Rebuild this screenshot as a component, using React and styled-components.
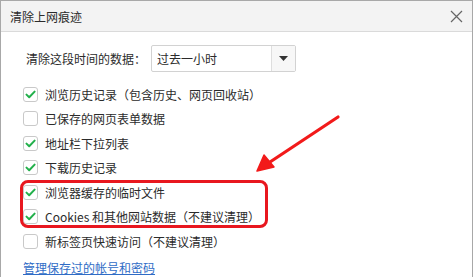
import React from 'react'
import styled, { createGlobalStyle } from 'styled-components'

const GlobalStyle = createGlobalStyle`
    html, body {
        margin: 0;
        padding: 0;
        background: #ffffff;
    }
    body {
        font-family: "Noto Sans CJK SC", "Liberation Sans", sans-serif;
        color: #2b2b2b;
    }
`

const items = [
    { label: '浏览历史记录（包含历史、网页回收站）', checked: true },
    { label: '已保存的网页表单数据', checked: false },
    { label: '地址栏下拉列表', checked: true },
    { label: '下载历史记录', checked: true },
    { label: '浏览器缓存的临时文件', checked: true },
    { label: 'Cookies 和其他网站数据（不建议清理）', checked: true },
    { label: '新标签页快速访问（不建议清理）', checked: false },
]

function CheckIcon() {
    return (
        <svg width="11" height="9" viewBox="0 0 11 9">
            <path d="M1.5 4.6 L4.2 7.2 L9.6 1.6" fill="none" stroke="#22b04b" strokeWidth="2" strokeLinecap="round" strokeLinejoin="round" />
        </svg>
    )
}

function App() {
    return (
        <Page>
            <GlobalStyle />
            <Dialog>
                <TitleBar>
                    <Title>清除上网痕迹</Title>
                    <CloseButton>
                        <svg width="13" height="13" viewBox="0 0 13 13">
                            <path d="M1 1 L12 12 M12 1 L1 12" stroke="#666" strokeWidth="1.2" />
                        </svg>
                    </CloseButton>
                </TitleBar>
                <Body>
                    <RangeRow>
                        <RangeLabel>清除这段时间的数据：</RangeLabel>
                        <Select>
                            <SelectValue>过去一小时</SelectValue>
                            <SelectArrow>
                                <svg width="9" height="5" viewBox="0 0 9 5">
                                    <path d="M0 0 L9 0 L4.5 5 Z" fill="#333" />
                                </svg>
                            </SelectArrow>
                        </Select>
                    </RangeRow>
                    <List>
                        {items.map((item) => (
                            <Item key={item.label}>
                                <Box>{item.checked && <CheckIcon />}</Box>
                                <ItemText>{item.label}</ItemText>
                            </Item>
                        ))}
                    </List>
                    <Link>管理保存过的帐号和密码</Link>
                </Body>
                <Highlight />
                <Arrow width="90" height="60" viewBox="0 0 90 60">
                    <line x1="85" y1="3" x2="14" y2="50" stroke="#f21a1a" strokeWidth="3.2" strokeLinecap="round" />
                    <path d="M4 57 L11 41 L21 53 Z" fill="#f21a1a" stroke="#f21a1a" strokeWidth="1.5" strokeLinejoin="round" />
                </Arrow>
            </Dialog>
        </Page>
    )
}

export default App

const Page = styled.div`
    width: 475px;
    height: 277px;
    overflow: hidden;
    background: #ffffff;
`

const Dialog = styled.div`
    position: relative;
    width: 473px;
    height: 290px;
    border: 1px solid #a8a8a8;
    border-bottom: none;
    box-sizing: border-box;
    background: #ffffff;
`

const TitleBar = styled.div`
    height: 30px;
    display: flex;
    align-items: center;
    justify-content: space-between;
    padding: 0 9px 0 9px;
    background: #f3f3f3;
    border-bottom: 1px solid #dadada;
`

const Title = styled.div`
    font-size: 12px;
    white-space: nowrap;
    margin-top: 1px;
`

const CloseButton = styled.div`
    display: flex;
    align-items: center;
    margin-top: 1px;
`

const Body = styled.div`
    padding: 13px 0 0 21px;
`

const RangeRow = styled.div`
    display: flex;
    align-items: center;
    padding-left: 4px;
    height: 27px;
`

const RangeLabel = styled.div`
    font-size: 12px;
    white-space: nowrap;
    width: 125px;
`

const Select = styled.div`
    display: flex;
    width: 145px;
    height: 27px;
    border: 1px solid #d2d2d2;
    border-radius: 2px;
    box-sizing: border-box;
`

const SelectValue = styled.div`
    flex: 1;
    font-size: 12px;
    white-space: nowrap;
    padding-left: 5px;
    display: flex;
    align-items: center;
    border-right: 1px solid #dedede;
`

const SelectArrow = styled.div`
    width: 23px;
    display: flex;
    align-items: center;
    justify-content: center;
    background: #f7f7f7;
`

const List = styled.div`
    display: flex;
    flex-direction: column;
    margin-top: 10px;
`

const Item = styled.div`
    display: flex;
    align-items: center;
    height: 24.5px;
`

const Box = styled.div`
    width: 15px;
    height: 15px;
    flex-shrink: 0;
    box-sizing: border-box;
    border: 1px solid #c9c9c9;
    border-radius: 3px;
    display: flex;
    align-items: center;
    justify-content: center;
    margin-left: 1px;
    background: #ffffff;
`

const ItemText = styled.div`
    font-size: 12px;
    white-space: nowrap;
    margin-left: 7px;
`

const Link = styled.div`
    font-size: 12px;
    white-space: nowrap;
    color: #2f6cc6;
    text-decoration: underline;
    margin-top: 5px;
    margin-left: 1px;
`

const Highlight = styled.div`
    position: absolute;
    left: 19px;
    top: 179px;
    width: 248px;
    height: 48px;
    border: 3px solid #e8171f;
    border-radius: 8px;
    box-sizing: border-box;
`

const Arrow = styled.svg`
    position: absolute;
    left: 252px;
    top: 113px;
`
